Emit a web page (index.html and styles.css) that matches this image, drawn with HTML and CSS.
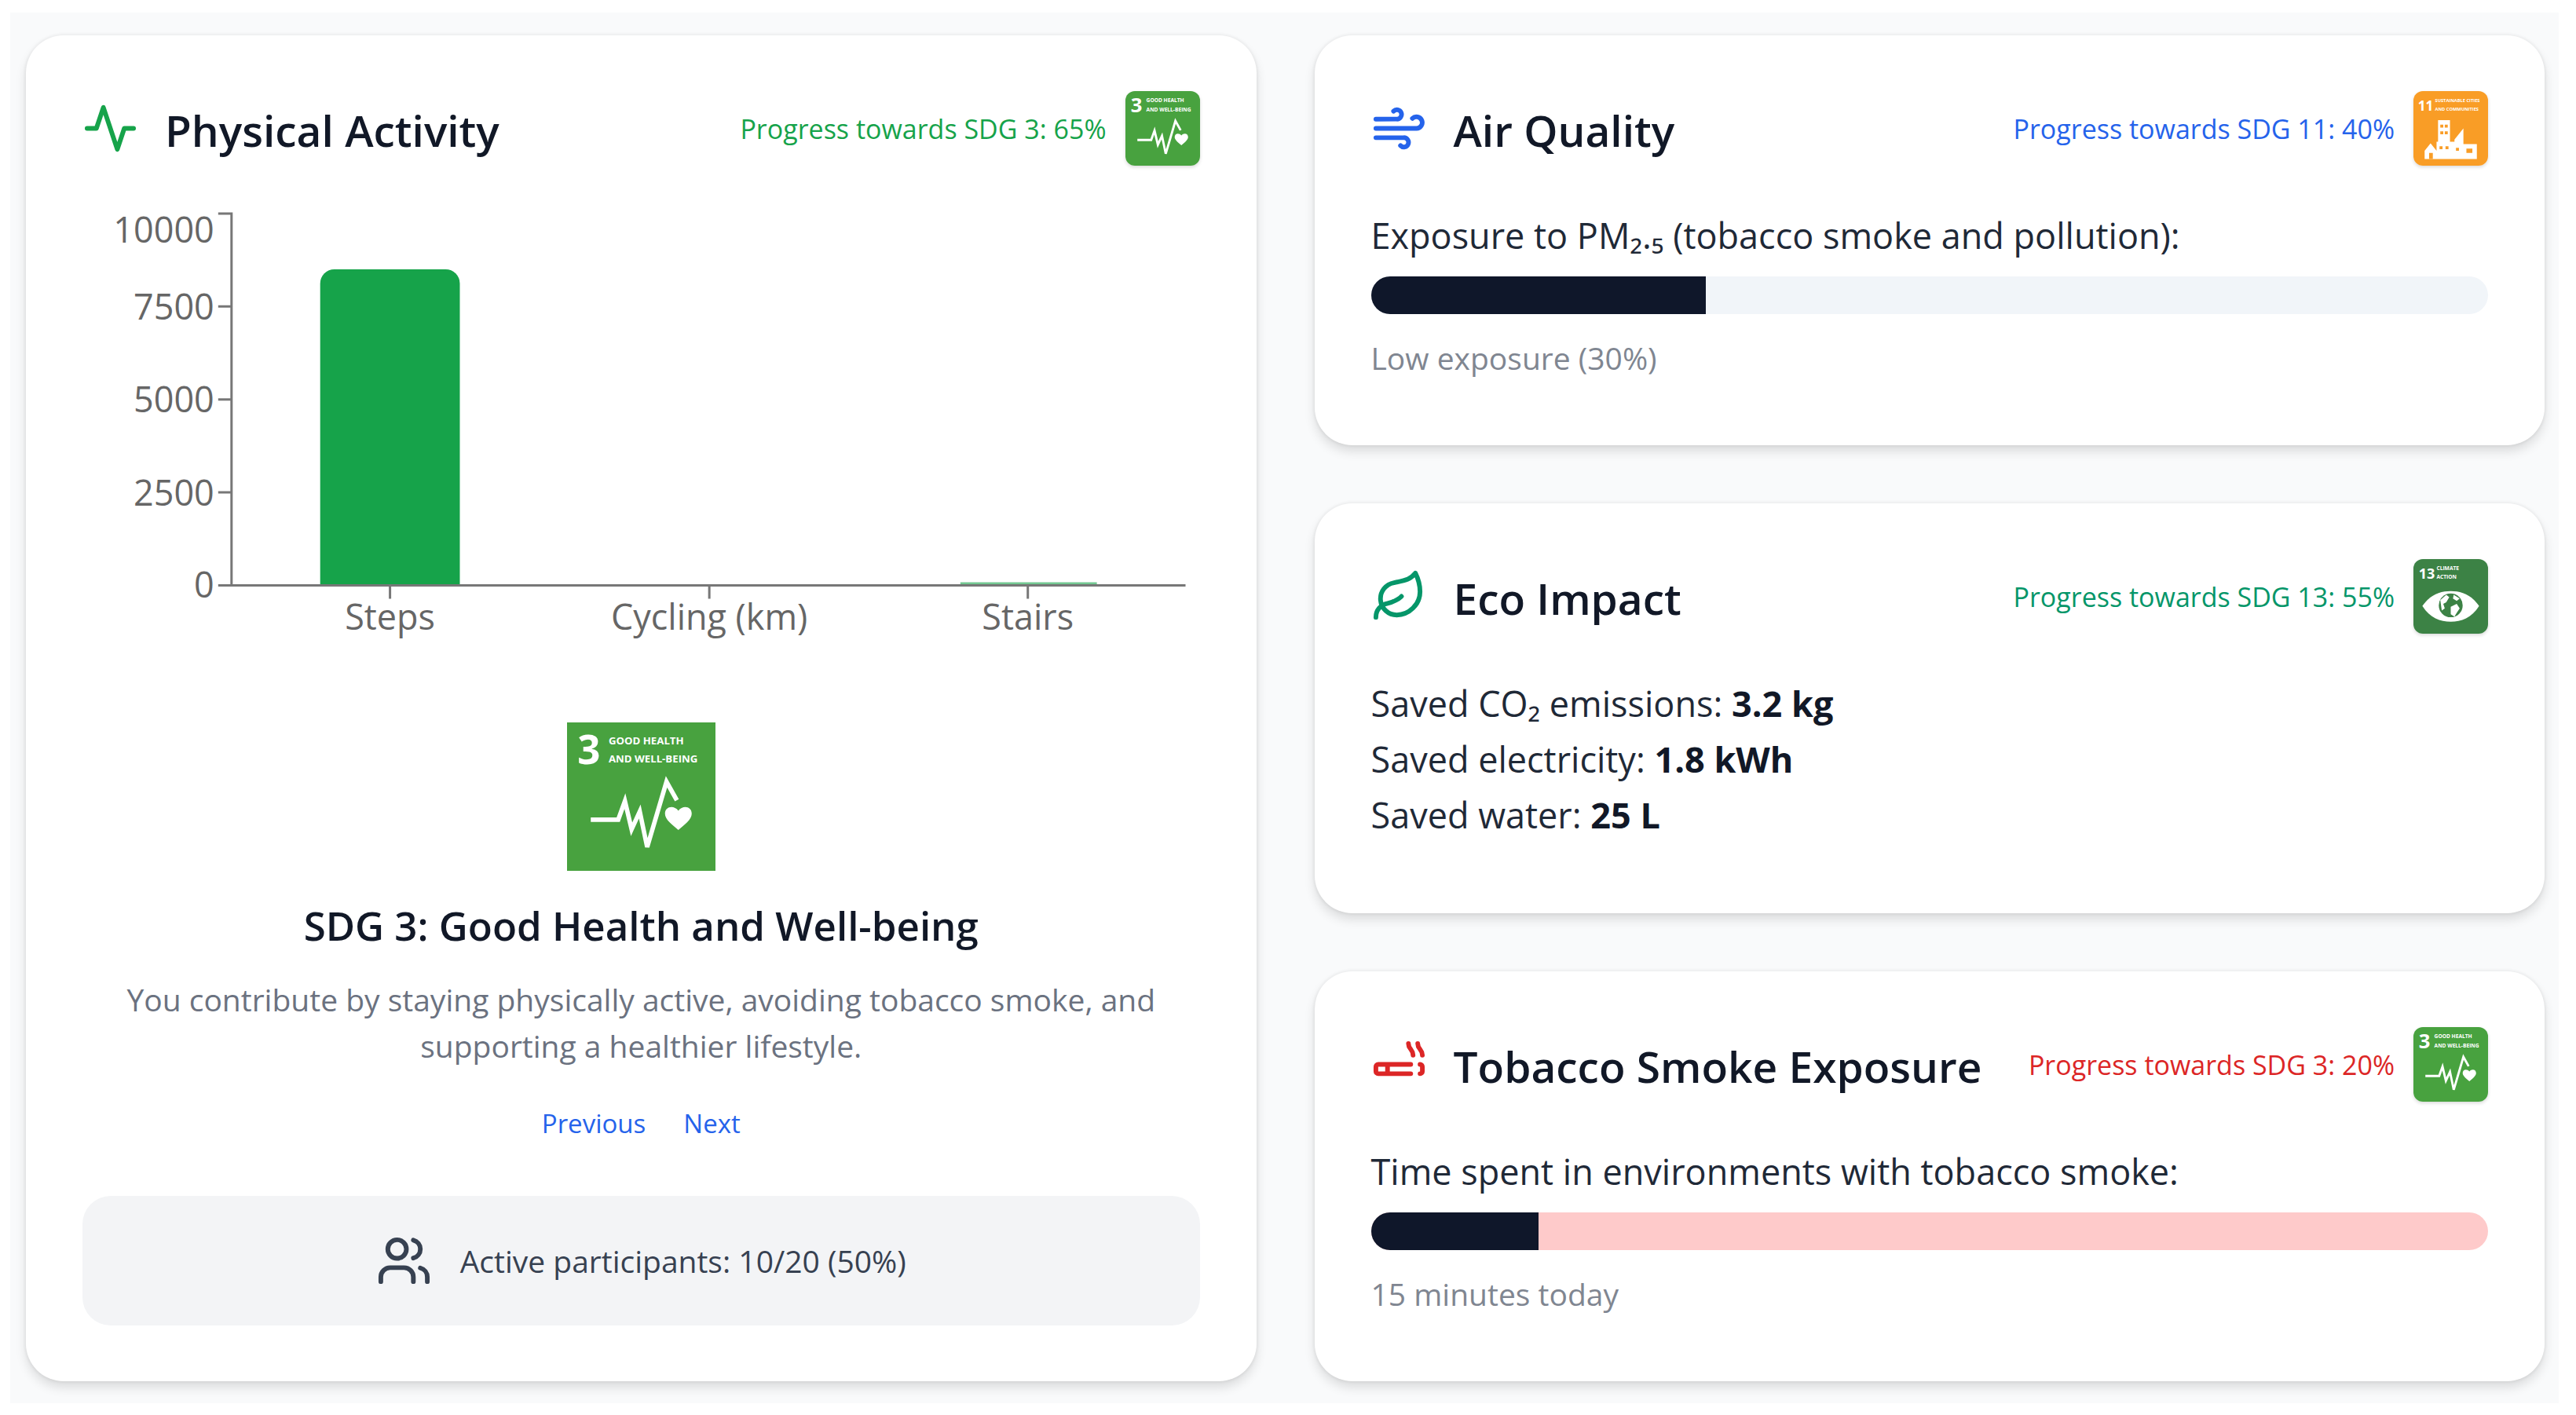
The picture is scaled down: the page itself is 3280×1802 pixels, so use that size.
FILE: index.html
```html
<!DOCTYPE html>
<html lang="en">
<head>
<meta charset="utf-8">
<title>Health and Sustainability Dashboard</title>
<link rel="stylesheet" href="styles.css">
</head>
<body>
<main class="dashboard">
  <section class="card activity">
    <header class="card-header">
      <svg class="icon green" viewBox="0 0 24 24"><path d="M22 12h-4l-3 9L9 3l-3 9H2"/></svg>
      <h2>Physical Activity</h2>
      <span class="progress-note green">Progress towards SDG 3: 65%</span>
      <svg class="badge" viewBox="0 0 100 100" role="img" aria-label="SDG 3">
        <rect width="100" height="100" fill="#48a23f"/>
        <g class="tile-text">
          <text x="7" y="28" font-size="27">3</text>
          <text x="28" y="15" font-size="7">GOOD HEALTH</text>
          <text x="28" y="27" font-size="7">AND WELL-BEING</text>
        </g>
        <path d="M16 65.500H34.500L39 53L43.500 72L49 60L54 84L67 40L74 52.500" fill="none" stroke="#fff" stroke-width="3"/>
        <path d="M75 72.500C71 69 66 65.500 66 61.500C66 56.500 72 55.500 75 59.500C78 55.500 84 56.500 84 61.500C84 65.500 79 69 75 72.500Z" fill="#fff"/>
      </svg>
    </header>

    <svg class="chart" viewBox="0 0 1424 600" role="img" aria-label="Steps, cycling and stairs">
      <path class="bar" d="M303 496V111a18 18 0 0 1 18-18H463a18 18 0 0 1 18 18V496Z"/>
      <path class="bar small" d="M1119 492h174v4h-174z"/>
      <path class="axis" d="M173 22H190V496H1406M173 140.500H190M173 259H190M173 377.500H190M173 496H190M392 496V513M799 496V513M1205 496V513"/>
      <g class="labels end">
        <text x="168" y="59">10000</text>
        <text x="168" y="157">7500</text>
        <text x="168" y="275">5000</text>
        <text x="168" y="394">2500</text>
        <text x="168" y="512">0</text>
      </g>
      <g class="labels middle">
        <text x="392" y="553">Steps</text>
        <text x="799" y="553">Cycling (km)</text>
        <text x="1205" y="553">Stairs</text>
      </g>
    </svg>

    <div class="goal">
      <svg class="goal-tile" viewBox="0 0 100 100" role="img" aria-label="SDG 3">
        <rect width="100" height="100" fill="#48a23f"/>
        <g class="tile-text">
          <text x="7" y="28" font-size="27">3</text>
          <text x="28" y="15" font-size="7">GOOD HEALTH</text>
          <text x="28" y="27" font-size="7">AND WELL-BEING</text>
        </g>
        <path d="M16 65.500H34.500L39 53L43.500 72L49 60L54 84L67 40L74 52.500" fill="none" stroke="#fff" stroke-width="3"/>
        <path d="M75 72.500C71 69 66 65.500 66 61.500C66 56.500 72 55.500 75 59.500C78 55.500 84 56.500 84 61.500C84 65.500 79 69 75 72.500Z" fill="#fff"/>
      </svg>
      <h3>SDG 3: Good Health and Well-being</h3>
      <p>You contribute by staying physically active, avoiding tobacco smoke, and supporting a healthier lifestyle.</p>
      <nav class="pager">
        <button type="button">Previous</button>
        <button type="button">Next</button>
      </nav>
    </div>

    <div class="participants">
      <svg class="icon" viewBox="0 0 24 24"><path d="M16 21v-2a4 4 0 0 0-4-4H6a4 4 0 0 0-4 4v2"/><circle cx="9" cy="7" r="4"/><path d="M22 21v-2a4 4 0 0 0-3-3.870M16 3.130a4 4 0 0 1 0 7.750"/></svg>
      <span>Active participants: 10/20 (50%)</span>
    </div>
  </section>

  <div class="column">
    <section class="card">
      <header class="card-header">
        <svg class="icon blue" viewBox="0 0 24 24"><path d="M17.700 7.700a2.500 2.500 0 1 1 1.800 4.300H2M9.600 4.600A2 2 0 1 1 11 8H2M12.600 19.400A2 2 0 1 0 14 16H2"/></svg>
        <h2>Air Quality</h2>
        <span class="progress-note blue">Progress towards SDG 11: 40%</span>
        <svg class="badge" viewBox="0 0 100 100" role="img" aria-label="SDG 11">
          <rect width="100" height="100" fill="#f99d26"/>
          <g class="tile-text">
            <text x="6" y="26" font-size="18">11</text>
            <text x="29" y="15" font-size="6">SUSTAINABLE CITIES</text>
            <text x="29" y="26" font-size="6">AND COMMUNITIES</text>
          </g>
          <path fill="#fff" d="M15 91V80L23 70L31 80V68H33V39H49V68H55V65L67 50V71H85V91Z"/>
          <path fill="#f99d26" d="M21 91V83H26V91ZM36 45H40V49H36ZM42 45H46V49H42ZM36 54H40V58H36ZM42 54H46V58H42ZM35 74H39V78H35ZM43 74H47V78H43ZM57 76H61V80H57ZM71 77H79V83H71Z"/>
        </svg>
      </header>
      <p class="body-text" id="air-label">Exposure to PM₂.₅ (tobacco smoke and pollution):</p>
      <div class="meter" role="progressbar" aria-labelledby="air-label" aria-valuenow="30"><div class="meter-fill" style="width:30%"></div></div>
      <p class="caption">Low exposure (30%)</p>
    </section>

    <section class="card">
      <header class="card-header">
        <svg class="icon emerald" viewBox="0 0 24 24"><path d="M11 20A7 7 0 0 1 9.800 6.100C15.500 5 17 4.480 19 2c1 2 2 4.180 2 8 0 5.500-4.780 10-10 10Z"/><path d="M2 21c0-3 1.850-5.360 5.080-6C9.500 14.520 12 13 13 12"/></svg>
        <h2>Eco Impact</h2>
        <span class="progress-note emerald">Progress towards SDG 13: 55%</span>
        <svg class="badge" viewBox="0 0 100 100" role="img" aria-label="SDG 13">
          <rect width="100" height="100" fill="#3c8245"/>
          <g class="tile-text">
            <text x="7" y="26" font-size="19">13</text>
            <text x="31" y="15" font-size="7">CLIMATE</text>
            <text x="31" y="26" font-size="7">ACTION</text>
          </g>
          <path fill="#fff" d="M12 63C22 48 36 43 50 43S78 48 88 63C78 79 64 84 50 84S22 79 12 63Z"/>
          <circle cx="50" cy="62" r="16" fill="#3c8245"/>
          <path fill="#fff" d="M36 55L44 48L48 51L44 58L40 60L42 66L38 69ZM50 64L58 60L62 66L58 72L55 77L50 74ZM54 48L62 53L58 56L53 53Z"/>
        </svg>
      </header>
      <p class="body-text">Saved CO₂ emissions: <strong>3.2 kg</strong></p>
      <p class="body-text">Saved electricity: <strong>1.8 kWh</strong></p>
      <p class="body-text">Saved water: <strong>25 L</strong></p>
    </section>

    <section class="card">
      <header class="card-header">
        <svg class="icon red" viewBox="0 0 24 24"><path d="M17 12H3a1 1 0 0 0-1 1v2a1 1 0 0 0 1 1h14M18 8c0-2.500-2-2.500-2-5M21 16a1 1 0 0 0 1-1v-2a1 1 0 0 0-1-1M22 8c0-2.500-2-2.500-2-5M7 12v4"/></svg>
        <h2>Tobacco Smoke Exposure</h2>
        <span class="progress-note red">Progress towards SDG 3: 20%</span>
        <svg class="badge" viewBox="0 0 100 100" role="img" aria-label="SDG 3">
          <rect width="100" height="100" fill="#48a23f"/>
          <g class="tile-text">
            <text x="7" y="28" font-size="27">3</text>
            <text x="28" y="15" font-size="7">GOOD HEALTH</text>
            <text x="28" y="27" font-size="7">AND WELL-BEING</text>
          </g>
          <path d="M16 65.500H34.500L39 53L43.500 72L49 60L54 84L67 40L74 52.500" fill="none" stroke="#fff" stroke-width="3"/>
          <path d="M75 72.500C71 69 66 65.500 66 61.500C66 56.500 72 55.500 75 59.500C78 55.500 84 56.500 84 61.500C84 65.500 79 69 75 72.500Z" fill="#fff"/>
        </svg>
      </header>
      <p class="body-text" id="smoke-label">Time spent in environments with tobacco smoke:</p>
      <div class="meter danger" role="progressbar" aria-labelledby="smoke-label" aria-valuenow="15"><div class="meter-fill" style="width:15%"></div></div>
      <p class="caption">15 minutes today</p>
    </section>
  </div>
</main>
</body>
</html>
```
FILE: styles.css
```css
* {
  box-sizing: border-box;
}

body {
  margin: 0;
  padding: 16px 22px 13px 13px;
  background: #fff;
  color: #111827;
  font-family: "Open Sans", "Noto Sans", sans-serif;
}

h2, h3, p {
  margin: 0;
}

.dashboard {
  display: grid;
  grid-template-columns: 1fr 1fr;
  gap: 74px;
  padding: 29px 18px 28px 20px;
  background: #f9fafb;
}

.column {
  display: grid;
  grid-template-rows: repeat(3, 1fr);
  gap: 74px;
}

.card {
  padding: 71px 72px;
  border-radius: 48px;
  background: #fff;
  box-shadow: 0 0 3px 2px rgba(0, 0, 0, 0.04), 0 8px 14px rgba(0, 0, 0, 0.12);
}

.card-header {
  display: flex;
  align-items: center;
  height: 95px;
  margin-bottom: 53px;
}

.card-header h2 {
  margin: 0 auto 0 34px;
  padding-top: 4px;
  font-size: 55px;
  line-height: 72px;
  font-weight: 600;
  white-space: nowrap;
}

.icon {
  flex: none;
  width: 71px;
  height: 71px;
  fill: none;
  stroke: currentColor;
  stroke-width: 2;
  stroke-linecap: round;
  stroke-linejoin: round;
}

.progress-note {
  font-size: 34px;
  line-height: 48px;
  white-space: nowrap;
}

.badge {
  flex: none;
  width: 95px;
  height: 95px;
  margin-left: 24px;
  border-radius: 12px;
  box-shadow: 0 2px 4px rgba(0, 0, 0, 0.15);
}

.tile-text {
  fill: #fff;
  font-weight: 700;
}

.green { color: #16a34a; }
.blue { color: #2563eb; }
.emerald { color: #059669; }
.red { color: #dc2626; }

.body-text {
  color: #1f2937;
  font-size: 45px;
  line-height: 71px;
}

.body-text strong {
  color: #111827;
  font-weight: 700;
}

.meter {
  height: 48px;
  margin: 17px 0 26px;
  overflow: hidden;
  border-radius: 24px;
  background: #f1f5f9;
}

.meter.danger {
  background: #fecaca;
}

.meter-fill {
  height: 100%;
  background: #0f172a;
}

.caption {
  color: #808691;
  font-size: 39px;
  line-height: 60px;
}

.activity {
  display: flex;
  flex-direction: column;
}

.activity .card-header {
  margin-bottom: 39px;
}

.chart {
  display: block;
  width: 100%;
}

.axis {
  fill: none;
  stroke: #777;
  stroke-width: 3;
}

.bar {
  fill: #16a34a;
}

.bar.small {
  opacity: 0.6;
}

.labels {
  fill: #666;
  font-size: 45px;
}

.end { text-anchor: end; }
.middle { text-anchor: middle; }

.goal {
  display: flex;
  flex-direction: column;
  align-items: center;
  margin-top: 71px;
  text-align: center;
}

.goal-tile {
  width: 189px;
  height: 189px;
}

.goal h3 {
  margin: 34px 0 29px;
  font-size: 51px;
  line-height: 71px;
  font-weight: 600;
}

.goal p {
  color: #6b7280;
  font-size: 39px;
  line-height: 59px;
}

.pager {
  display: flex;
  gap: 48px;
  margin: 40px 0 62px;
}

.pager button {
  padding: 0;
  border: 0;
  background: none;
  color: #2563eb;
  font: inherit;
  font-size: 33px;
  line-height: 60px;
}

.participants {
  display: flex;
  align-items: center;
  justify-content: center;
  gap: 36px;
  padding: 47px;
  border-radius: 36px;
  background: #f3f4f6;
  color: #374151;
  font-size: 39px;
  line-height: 59px;
}
```
